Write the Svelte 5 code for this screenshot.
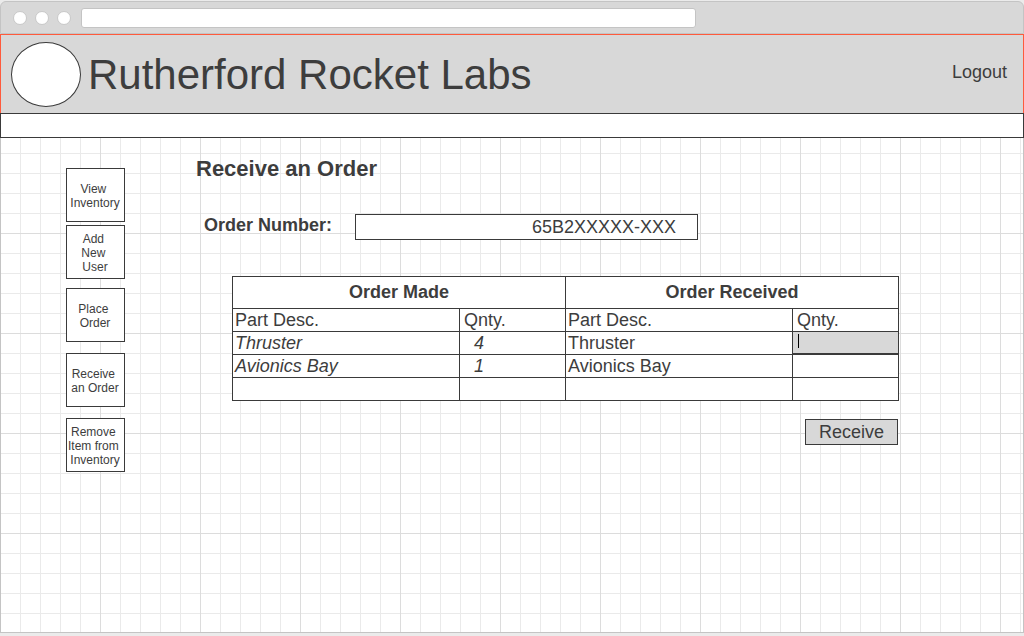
<script>
  const actions = [
    { lines: 'View \nInventory' },
    { lines: 'Add \nNew \nUser' },
    { lines: 'Place \nOrder', start: 'section' },
    { lines: 'Receive \nan Order', start: 'group' },
    { lines: 'Remove \nItem from \nInventory', start: 'group' },
  ];

  let address = $state('');
  let orderNumber = $state('65B2XXXXX-XXX');
  let rows = $state([
    { part: 'Thruster', ordered: 4, received: '', editable: true, active: true },
    { part: 'Avionics Bay', ordered: 1, received: '', editable: true, active: false },
    { part: '', ordered: '', received: '', editable: false, active: false },
  ]);
</script>

<div class="desktop">
  <div class="chrome">
    <div class="dots"><span></span><span></span><span></span></div>
    <input class="address" type="text" aria-label="Address" bind:value={address} />
  </div>

  <header>
    <span class="logo"></span>
    <h1>Rutherford Rocket Labs</h1>
    <a class="logout" href="#logout">Logout</a>
  </header>
  <div class="strip"></div>

  <div class="content">
    <nav>
      {#each actions as action}
        <button type="button" class={['action', action.start]}>{action.lines}</button>
      {/each}
    </nav>

    <main>
      <h2>Receive an Order</h2>
      <form onsubmit={(e) => e.preventDefault()}>
        <div class="field">
          <label for="order-number">Order Number:</label>
          <input id="order-number" type="text" bind:value={orderNumber} />
        </div>

        <div class="order">
          <table>
            <colgroup>
              <col /><col class="qty" /><col /><col class="qty" />
            </colgroup>
            <thead>
              <tr class="groups">
                <th colspan="2" scope="colgroup">Order Made</th>
                <th colspan="2" scope="colgroup">Order Received</th>
              </tr>
              <tr class="columns">
                <th scope="col">Part Desc.</th>
                <th scope="col" class="quantity">Qnty.</th>
                <th scope="col">Part Desc.</th>
                <th scope="col" class="quantity">Qnty.</th>
              </tr>
            </thead>
            <tbody>
              {#each rows as row}
                <tr>
                  <td class="made">{row.part}</td>
                  <td class="made count">{row.ordered}</td>
                  <td>{row.part}</td>
                  <td class="entry">
                    {#if row.editable}
                      <input
                        type="text"
                        class:active={row.active}
                        aria-label={`${row.part} quantity received`}
                        bind:value={row.received}
                      />
                    {/if}
                  </td>
                </tr>
              {/each}
            </tbody>
          </table>
          <button class="receive" type="submit">Receive</button>
        </div>
      </form>
    </main>
  </div>
</div>

<style>
  :global(body) {
    margin: 0;
  }

  .desktop {
    --ink: #3a3a3a;
    --fill: #d8d8d8;
    --edge: #c4c4c4;
    box-sizing: border-box;
    min-height: 100vh;
    display: flex;
    flex-direction: column;
    padding: 1px 0 3px;
    background: #ebebeb;
    color: #3d3d3d;
    font: 18px/20px 'Liberation Sans', Arial, sans-serif;
  }

  .desktop * {
    box-sizing: border-box;
  }

  input,
  button {
    margin: 0;
    padding: 0;
    border-radius: 0;
    border: 1px solid var(--ink);
    background: #fff;
    color: inherit;
    font: inherit;
  }

  .chrome {
    display: flex;
    align-items: center;
    gap: 10px;
    padding: 6px 12px 5px;
    border: 1px solid var(--edge);
    border-radius: 6px 6px 0 0;
    background: var(--fill);
  }

  .dots {
    display: flex;
    gap: 8px;
  }

  .dots span {
    width: 14px;
    height: 14px;
    border: 1px solid #c8c8c8;
    border-radius: 50%;
    background: #fff;
  }

  .address {
    width: 615px;
    height: 20px;
    border-color: var(--edge);
    border-radius: 3px;
  }

  header {
    display: flex;
    align-items: center;
    gap: 7px;
    padding: 7px 16px 6px 10px;
    border: 1px solid #ff5a3c;
    border-bottom: 0;
    background: var(--fill);
  }

  .logo {
    width: 70px;
    height: 65px;
    border: 1px solid var(--ink);
    border-radius: 50%;
    background: #fff;
  }

  h1 {
    margin: 0;
    font-size: 42px;
    line-height: 48px;
    font-weight: 400;
  }

  .logout {
    margin-left: auto;
    padding-bottom: 6px;
    color: inherit;
    text-decoration: none;
  }

  .strip {
    height: 25px;
    border: 1px solid var(--ink);
    background: #fff;
  }

  .content {
    flex: 1;
    display: flex;
    align-items: flex-start;
    gap: 71px;
    padding: 0 124px 24px 65px;
    border: 1px solid var(--edge);
    border-top: 0;
    background-color: #fff;
    background-image:
      linear-gradient(90deg, #dcdcdc 1px, transparent 1px),
      linear-gradient(#dcdcdc 1px, transparent 1px),
      linear-gradient(90deg, #eaeaea 1px, transparent 1px),
      linear-gradient(#eaeaea 1px, transparent 1px);
    background-size: 100px 100px, 100px 100px, 20px 20px, 20px 20px;
    background-position: -1px 95px, -1px 95px, -1px 15px, -1px 15px;
  }

  nav {
    display: flex;
    flex-direction: column;
    gap: 3px;
    padding-top: 30px;
  }

  .action {
    width: 59px;
    height: 54px;
    padding: 2px 1px 0 0;
    font-size: 12px;
    line-height: 14px;
    white-space: pre;
    display: flex;
    align-items: center;
    justify-content: center;
    text-align: center;
  }

  .section {
    margin-top: 6px;
  }

  .group {
    margin-top: 8px;
  }

  main {
    flex: 1;
    padding-top: 18px;
  }

  h2 {
    margin: 0;
    font-size: 22px;
    line-height: 26px;
  }

  .field {
    display: flex;
    align-items: center;
    justify-content: space-between;
    max-width: 494px;
    margin: 32px 0 36px 8px;
  }

  label {
    padding-bottom: 4px;
    font-weight: 700;
  }

  #order-number {
    width: 343px;
    height: 26px;
    padding: 0 21px;
    text-align: right;
  }

  .order {
    display: flex;
    flex-direction: column;
    align-items: flex-end;
    gap: 18px;
    margin-left: 36px;
  }

  table {
    width: 100%;
    table-layout: fixed;
    border-collapse: collapse;
    background: #fff;
  }

  .qty {
    width: 106px;
  }

  th,
  td {
    height: 23px;
    padding: 0 2px;
    border: 1px solid var(--ink);
    text-align: left;
  }

  .groups th {
    height: 32px;
    padding-bottom: 2px;
    text-align: center;
  }

  .columns th {
    font-weight: 400;
  }

  .columns .quantity {
    padding-left: 4px;
  }

  .made {
    font-style: italic;
  }

  .made.count {
    padding-left: 14px;
  }

  td.entry {
    padding: 0;
  }

  .entry input {
    display: block;
    width: 100%;
    height: 22px;
    padding: 0 5px;
    border: 0;
  }

  .entry .active {
    border-bottom: 1px solid var(--ink);
    background: linear-gradient(#000, #000) 5px 2px / 1px 14px no-repeat var(--fill);
  }

  .receive {
    height: 26px;
    margin-right: 1px;
    padding: 0 13px;
    background: var(--fill);
  }
</style>
